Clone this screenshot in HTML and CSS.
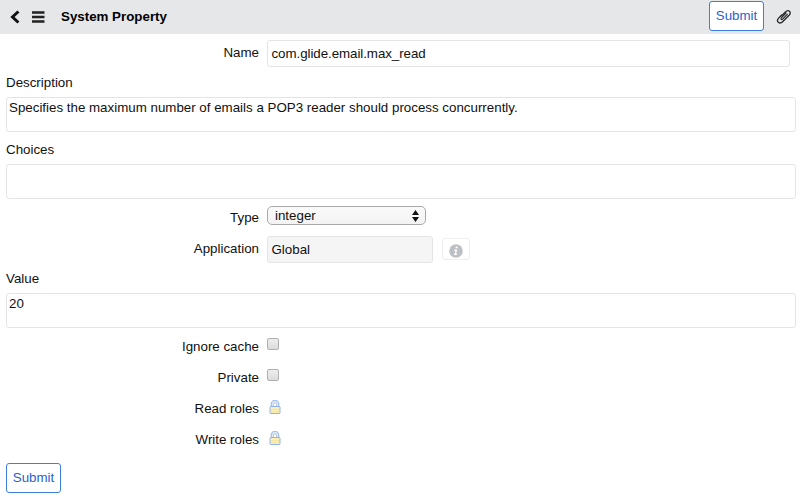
FILE: index.html
```
<!DOCTYPE html>
<html lang="en">
<head>
<meta charset="utf-8">
<title>System Property</title>
<link rel="stylesheet" href="styles.css">
</head>
<body>
<header class="bar">
  <svg class="back" width="10" height="14" viewBox="0 0 10 14"><path d="M8.400 1.500 2.500 7l5.900 5.500" fill="none" stroke="#111" stroke-width="3"/></svg>
  <svg class="menu" width="13" height="12" viewBox="0 0 13 12"><path d="M0 1.500h12.500M0 6h12.500M0 10.500h12.500" stroke="#222" stroke-width="2.300"/></svg>
  <h1 class="title">System Property</h1>
  <button class="submit">Submit</button>
  <svg class="clip" width="16" height="16" viewBox="0 0 16 16"><path d="M11.300 5.300 6.600 10.200c-1 1-2.300-.2-1.300-1.300L10 4" fill="none" stroke="#292929" stroke-width="1.200" stroke-linecap="round"/><path d="M5.600 6 2.600 9.100c-2.900 3.200.9 6.700 4 3.700l6.500-6.500c3-3.200-.8-6.300-3.700-3.400L5.600 6.700" fill="none" stroke="#292929" stroke-width="1.350" stroke-linecap="round"/></svg>
</header>
<main class="form">
  <div class="row name-row"><label class="label">Name</label><div class="field name">com.glide.email.max_read</div></div>
  <label class="block-label description">Description</label>
  <div class="field area">Specifies the maximum number of emails a POP3 reader should process concurrently.</div>
  <label class="block-label choices">Choices</label>
  <div class="field area"></div>
  <div class="row type-row"><label class="label">Type</label><div class="select"><span>integer</span><svg width="7" height="12" viewBox="0 0 7 12"><path d="M0 5 3.500 0 7 5zM0 7h7l-3.500 5z" fill="#111"/></svg></div></div>
  <div class="row app-row"><label class="label">Application</label><div class="field global">Global</div><div class="info"><svg width="14" height="14" viewBox="0 0 14 14"><circle cx="7" cy="7" r="6.800" fill="#bcbfc4"/><path d="M6.800 2.500h2l-.4 1.800h-2zM5.300 5.400h2.900l-1 4.300h1l-.3 1.300H4.900l.3-1.300h.6l.7-3H5z" fill="#fff"/></svg></div></div>
  <label class="block-label value">Value</label>
  <div class="field area">20</div>
  <div class="row check-row first"><label class="label">Ignore cache</label><span class="check"></span></div>
  <div class="row check-row"><label class="label">Private</label><span class="check"></span></div>
  <div class="row check-row"><label class="label">Read roles</label><svg class="lock" width="12" height="15" viewBox="0 0 12 15"><path d="M2.300 7V4a3.700 3.700 0 0 1 7.400 0V7" fill="#e6effb" stroke="#a3c0ef" stroke-width="1.300"/><path d="M4.300 7V4.500a1.700 1.700 0 0 1 3.400 0V7" fill="#fff" stroke="#a5adb5" stroke-width=".8"/><rect x="1" y="6.500" width="10" height="7" rx="1" fill="#fbefb6" stroke="#8fb2ec"/><path d="M2 9.500h8M2 11.500h8" stroke="#efdf9f" stroke-width=".7"/></svg></div>
  <div class="row check-row"><label class="label">Write roles</label><svg class="lock" width="12" height="15" viewBox="0 0 12 15"><path d="M2.300 7V4a3.700 3.700 0 0 1 7.400 0V7" fill="#e6effb" stroke="#a3c0ef" stroke-width="1.300"/><path d="M4.300 7V4.500a1.700 1.700 0 0 1 3.400 0V7" fill="#fff" stroke="#a5adb5" stroke-width=".8"/><rect x="1" y="6.500" width="10" height="7" rx="1" fill="#fbefb6" stroke="#8fb2ec"/><path d="M2 9.500h8M2 11.500h8" stroke="#efdf9f" stroke-width=".7"/></svg></div>
  <button class="submit bottom">Submit</button>
</main>
</body>
</html>
```
FILE: styles.css
```
* { box-sizing: border-box; }
body { margin: 0; background: #fff; color: #111; font: 13.33px/16px "Liberation Sans", Arial, sans-serif; }
svg { display: block; flex: none; }
.bar { height: 33.5px; background: #e6e7e9; display: flex; align-items: center; padding: 0 8px 0 10px; }
.menu { margin-left: 12px; }
.title { margin: 0 auto 0 16px; font-size: 13.33px; line-height: 16px; color: #000; }
.submit { width: 55px; height: 30px; padding: 0; border: 1px solid #3c7fdc; border-radius: 3px; background: #fff; color: #2c5fd0; font: inherit; margin-top: -2px; }
.clip { margin-left: 12px; }
.form { padding: 0 4px 0 6px; }
.row { display: flex; align-items: flex-start; }
.label { width: 253px; margin-right: 8px; text-align: right; }
.field { border: 1px solid #e4e4e4; border-radius: 3px; background: #fff; }
.name-row { height: 39.5px; padding-top: 6.5px; }
.name-row .label { padding-top: 5px; }
.name { width: 523px; height: 27px; padding: 5px 3.5px; letter-spacing: -0.06px; }
.block-label { display: block; }
.description { height: 24px; padding-top: 2px; }
.choices { height: 32px; padding-top: 10px; }
.value { height: 29px; padding-top: 7px; }
.area { height: 35px; padding: 2px; }
.type-row { height: 32px; padding-top: 7px; }
.type-row .label { padding-top: 4px; }
.select { width: 159px; height: 19px; border: 1px solid #aaa; border-radius: 5px; background: linear-gradient(#fafafa, #f3f3f3); display: flex; align-items: center; justify-content: space-between; padding: 0 6px 0 7px; }
.app-row { height: 33px; padding-top: 5px; }
.app-row .label { padding-top: 5px; }
.global { width: 166px; height: 27px; padding: 5px 3.5px; background: #f5f5f5; }
.info { width: 28px; height: 22px; margin: 2px 0 0 9px; border: 1px solid #eee; border-radius: 3px; display: flex; justify-content: center; padding-top: 5px; }
.check-row { height: 31px; }
.check-row .label { padding-top: 1px; }
.check-row.first { margin-top: 10px; }
.check { width: 12px; height: 12px; border: 1px solid #b0b0b0; border-radius: 2px; background: linear-gradient(#eee, #dcdcdc); }
.lock { margin-left: 2px; }
.submit.bottom { display: block; margin-top: 1px; }
```
